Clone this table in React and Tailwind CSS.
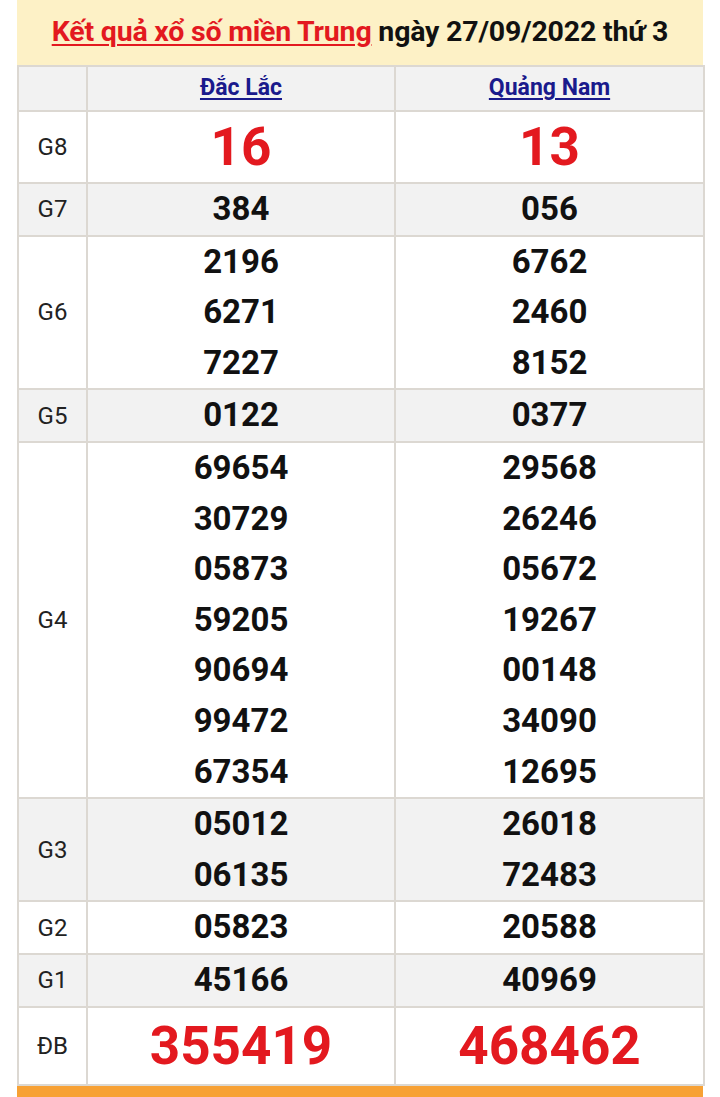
import React from "react";

const rows = [
  { g: "G8", a: ["16"], b: ["13"], big: true, h: "h-[72px]", bg: "bg-white" },
  { g: "G7", a: ["384"], b: ["056"], bg: "bg-[#f2f2f2]" },
  { g: "G6", a: ["2196", "6271", "7227"], b: ["6762", "2460", "8152"], bg: "bg-white" },
  { g: "G5", a: ["0122"], b: ["0377"], bg: "bg-[#f2f2f2]" },
  {
    g: "G4",
    a: ["69654", "30729", "05873", "59205", "90694", "99472", "67354"],
    b: ["29568", "26246", "05672", "19267", "00148", "34090", "12695"],
    bg: "bg-white",
  },
  { g: "G3", a: ["05012", "06135"], b: ["26018", "72483"], bg: "bg-[#f2f2f2]" },
  { g: "G2", a: ["05823"], b: ["20588"], bg: "bg-white" },
  { g: "G1", a: ["45166"], b: ["40969"], bg: "bg-[#f2f2f2]" },
  { g: "ĐB", a: ["355419"], b: ["468462"], big: true, h: "h-[78px]", bg: "bg-white" },
];

function Cell({ nums, big, h }) {
  return (
    <td className={`border-2 border-[#dcd8d2] text-center align-middle p-0 ${h || ""}`}>
      {nums.map((n, i) =>
        big ? (
          <div key={i} className="text-[53px] leading-[68px] font-bold text-[#e3191f]">
            {n}
          </div>
        ) : (
          <div key={i} className="text-[33px] leading-[50.6px] font-bold text-[#111]">
            {n}
          </div>
        )
      )}
    </td>
  );
}

export default function App() {
  return (
    <div
      className="w-[720px] h-[1097px] bg-white overflow-hidden px-[17px]"
      style={{ fontFamily: "Roboto, 'Noto Sans', sans-serif" }}
    >
      <div className="h-[65px] bg-[#fdf1c6] flex items-center justify-center">
        <h1 className="text-[28.5px] font-bold tracking-[-0.2px]">
          <a className="text-[#e3191f] underline decoration-2 underline-offset-[3px]">
            Kết quả xổ số miền Trung
          </a>{" "}
          <span className="text-[#111]">ngày 27/09/2022 thứ 3</span>
        </h1>
      </div>
      <table className="w-[686px] border-collapse table-fixed">
        <colgroup>
          <col className="w-[69px]" />
          <col className="w-[308px]" />
          <col className="w-[309px]" />
        </colgroup>
        <tbody>
          <tr className="bg-[#f2f2f2] h-[45px]">
            <td className="border-2 border-[#dcd8d2]"></td>
            <td className="border-2 border-[#dcd8d2] text-center">
              <a className="text-[23px] font-bold text-[#1a1a8c] underline underline-offset-[3px]">Đắc Lắc</a>
            </td>
            <td className="border-2 border-[#dcd8d2] text-center">
              <a className="text-[23px] font-bold text-[#1a1a8c] underline underline-offset-[3px]">Quảng Nam</a>
            </td>
          </tr>
          {rows.map((r) => (
            <tr key={r.g} className={r.bg}>
              <td className={`border-2 border-[#dcd8d2] text-center text-[24px] text-[#222] p-0 ${r.h || ""}`}>{r.g}</td>
              <Cell nums={r.a} big={r.big} h={r.h} />
              <Cell nums={r.b} big={r.big} h={r.h} />
            </tr>
          ))}
        </tbody>
      </table>
      <div className="h-[14px] bg-[#f7a134]"></div>
    </div>
  );
}
